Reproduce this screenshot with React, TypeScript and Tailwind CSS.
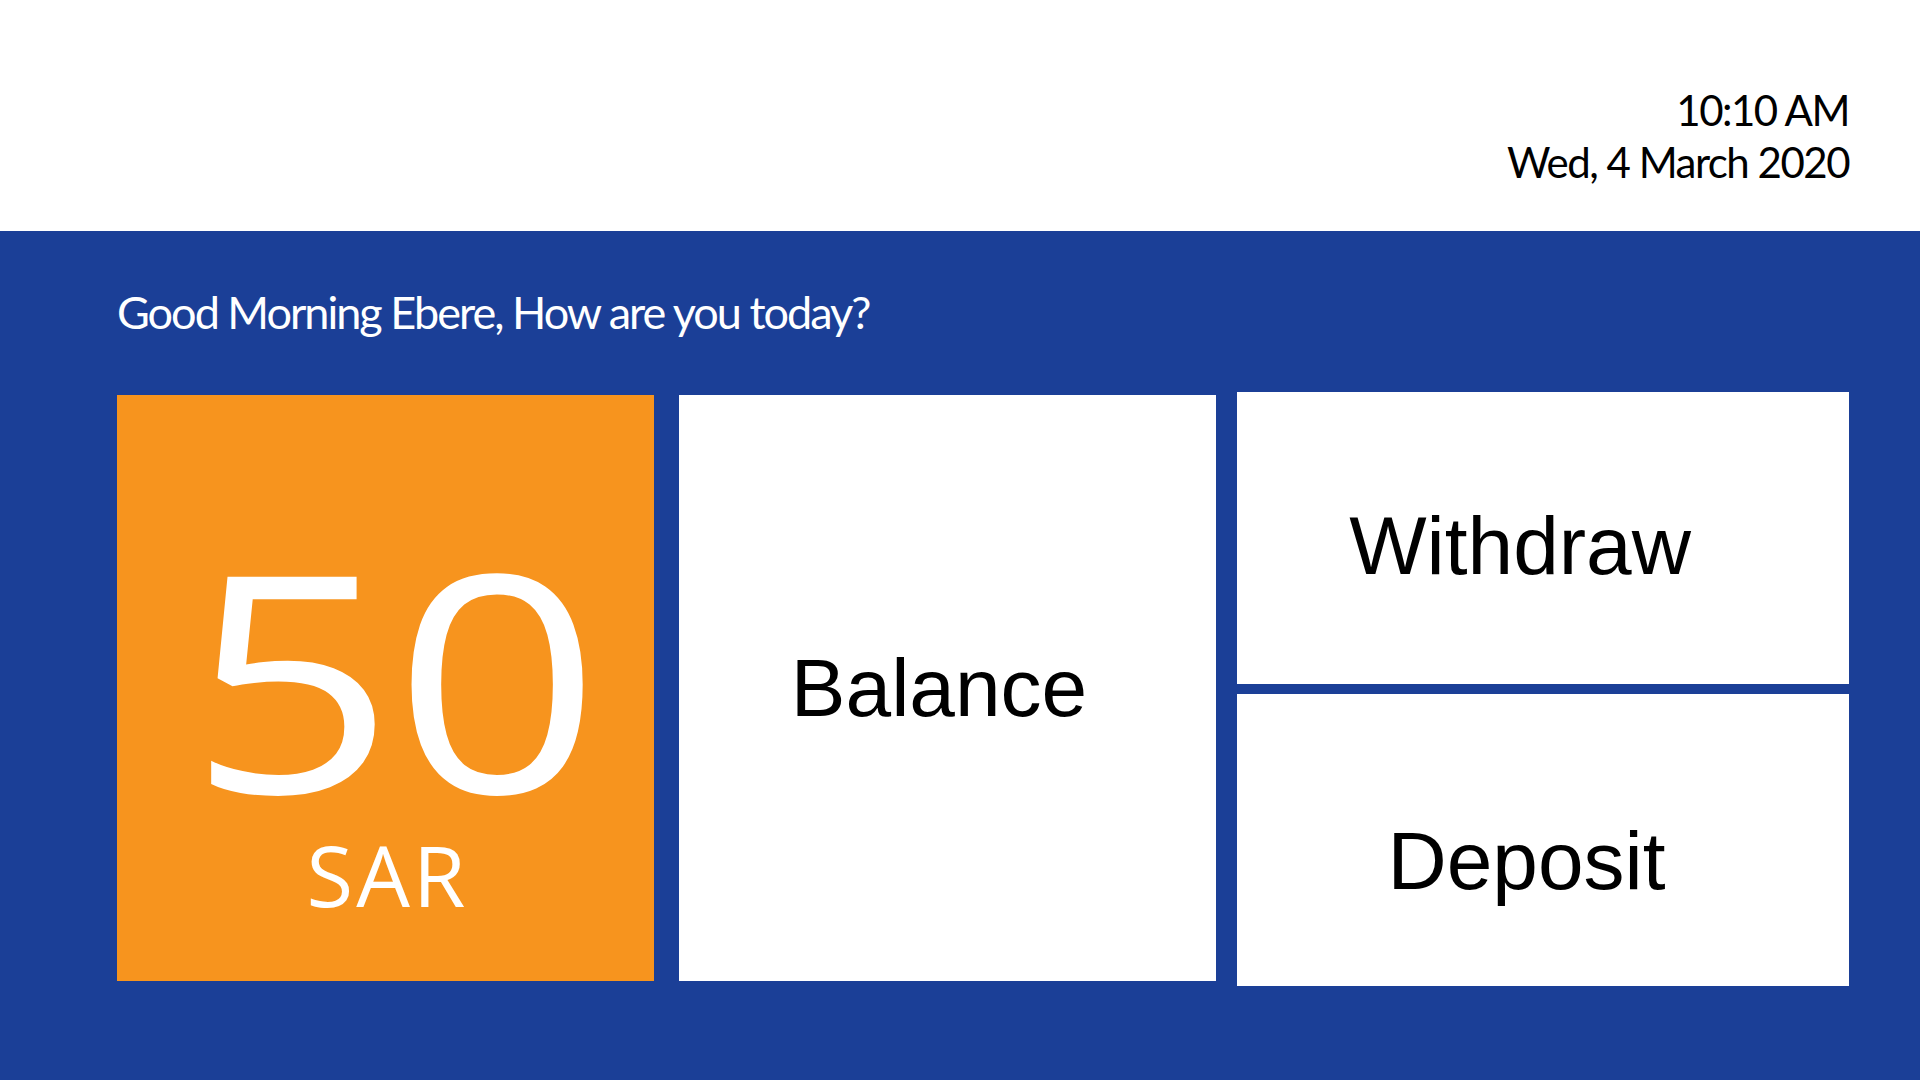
import React from 'react';

// Tile used for the white action buttons
type TileProps = {
  label: string;
  className?: string;
};

const Tile: React.FC<TileProps> = ({ label, className }) => {
  return (
    <button
      className={`bg-white flex items-center justify-center text-black text-[82px] leading-none font-['Liberation_Sans',Arial,sans-serif] ${className ?? ''}`}
    >
      {label}
    </button>
  );
};

const App: React.FC = () => {
  return (
    <div className="w-[1920px] h-[1080px] flex flex-col overflow-hidden font-['Lato',sans-serif]">
      {/* Header with clock */}
      <div className="h-[231px] bg-white flex flex-col items-end pt-[84px] pr-[71px] text-black text-[42px] leading-[52px] tracking-[-1.5px]">
        <div>10:10 AM</div>
        <div>Wed, 4 March 2020</div>
      </div>

      {/* Main blue area */}
      <div className="flex-1 bg-[#1b3f97] pl-[117px] pr-[71px] pt-[59px]">
        <p className="text-white text-[45px] leading-none tracking-[-2px]">
          Good Morning Ebere, How are you today?
        </p>

        <div className="flex items-start mt-[57px]">
          {/* Amount tile */}
          <div className="w-[537px] h-[586px] mt-[3px] bg-[#f7941e] flex flex-col items-center pt-[129px] text-white font-['Open_Sans',sans-serif]">
            <div className="text-[303px] leading-none tracking-[-2px] scale-x-[1.2] ml-[16px]">50</div>
            <div className="text-[85px] leading-none tracking-[3px] mt-[5px] ml-[4px]">SAR</div>
          </div>

          <Tile label="Balance" className="w-[537px] h-[586px] mt-[3px] ml-[25px] pr-[17px]" />

          <div className="flex flex-col gap-[10px] ml-[21px]">
            <Tile label="Withdraw" className="w-[612px] h-[292px] pr-[46px] pt-[16px]" />
            <Tile label="Deposit" className="w-[612px] h-[292px] pr-[33px] pt-[42px]" />
          </div>
        </div>
      </div>
    </div>
  );
};

export default App;
